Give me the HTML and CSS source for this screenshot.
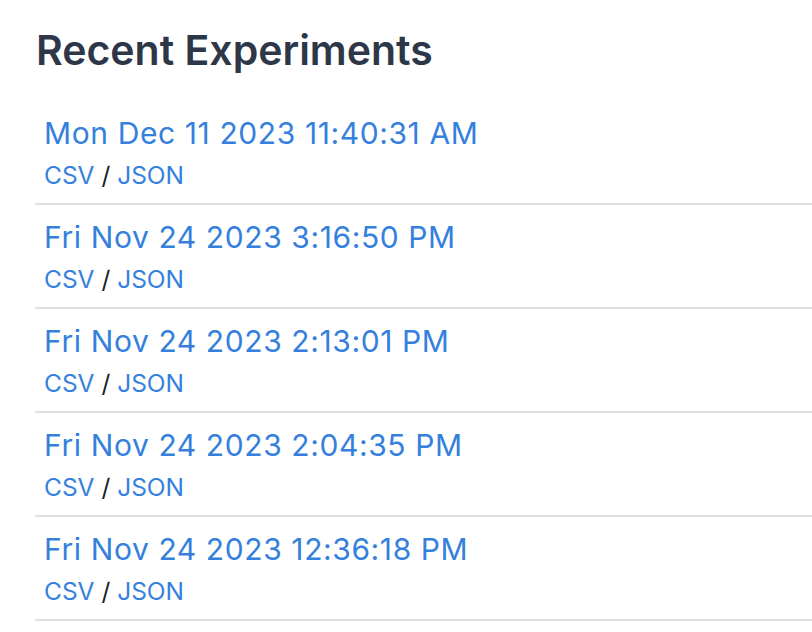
FILE: index.html
```html
<!DOCTYPE html>
<html lang="en">
<head>
<meta charset="utf-8">
<title>Recent Experiments</title>
<link rel="stylesheet" href="styles.css">
</head>
<body>
<main class="page">
  <h1 class="heading">Recent Experiments</h1>
  <ul class="list">
    <li class="item">
      <a class="title" href="#">Mon Dec 11 2023 11:40:31 AM</a>
      <div class="downloads"><a href="#">CSV</a> / <a href="#">JSON</a></div>
    </li>
    <li class="item">
      <a class="title" href="#">Fri Nov 24 2023 3:16:50 PM</a>
      <div class="downloads"><a href="#">CSV</a> / <a href="#">JSON</a></div>
    </li>
    <li class="item">
      <a class="title" href="#">Fri Nov 24 2023 2:13:01 PM</a>
      <div class="downloads"><a href="#">CSV</a> / <a href="#">JSON</a></div>
    </li>
    <li class="item">
      <a class="title" href="#">Fri Nov 24 2023 2:04:35 PM</a>
      <div class="downloads"><a href="#">CSV</a> / <a href="#">JSON</a></div>
    </li>
    <li class="item">
      <a class="title" href="#">Fri Nov 24 2023 12:36:18 PM</a>
      <div class="downloads"><a href="#">CSV</a> / <a href="#">JSON</a></div>
    </li>
  </ul>
</main>
</body>
</html>
```
FILE: styles.css
```css
html, body {
  margin: 0;
  padding: 0;
  background: #ffffff;
}
body {
  font-family: Inter, "Liberation Sans", sans-serif;
  color: #1a202c;
  overflow: hidden;
}
.page {
  padding: 25px 0 0 35px;
}
.heading {
  margin: 0 0 26px 1px;
  font-size: 41px;
  line-height: 50px;
  font-weight: 600;
  color: #2d3748;
}
.list {
  list-style: none;
  margin: 0;
  padding: 0;
}
.item {
  display: flex;
  flex-direction: column;
  gap: 6px;
  padding: 12px 0 12px 9px;
  border-bottom: 2px solid #e0e0e0;
}
.item a {
  color: #3580dd;
  text-decoration: none;
}
.title {
  font-size: 30px;
  line-height: 40px;
  letter-spacing: 0.6px;
}
.downloads {
  font-size: 24.5px;
  line-height: 32px;
  color: #1a202c;
}
```
